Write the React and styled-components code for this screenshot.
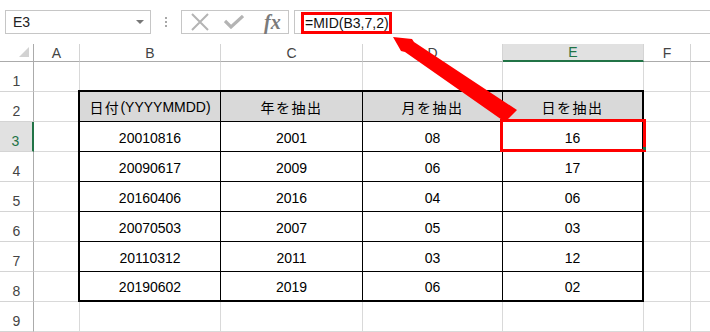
import React from 'react';
import styled, { createGlobalStyle } from 'styled-components';

const GlobalStyle = createGlobalStyle`
  * { box-sizing: border-box; }
  body {
    margin: 0;
    background: #fff;
    font-family: "Liberation Sans", "Noto Sans CJK JP", sans-serif;
  }
`;

const Page = styled.div`
  position: relative;
  width: 710px;
  height: 332px;
  overflow: hidden;
  background: #fff;
`;

// formula bar strip
const Toolbar = styled.div`
  display: flex;
  align-items: flex-start;
  height: 44px;
  padding: 10px 0 0 5px;
`;

const NameBox = styled.div`
  display: flex;
  align-items: center;
  justify-content: space-between;
  width: 146px;
  height: 24px;
  padding: 0 6px 0 7px;
  border: 1px solid #c6c6c6;
  font-size: 14px;
  color: #222;
`;

const Caret = styled.span`
  width: 0;
  height: 0;
  border-left: 4px solid transparent;
  border-right: 4px solid transparent;
  border-top: 4px solid #777;
`;

const Grip = styled.div`
  display: flex;
  flex-direction: column;
  align-items: center;
  justify-content: center;
  gap: 2px;
  width: 30px;
  height: 24px;

  span {
    width: 2px;
    height: 2px;
    background: #a8a8a8;
  }
`;

const ButtonGroup = styled.div`
  display: flex;
  align-items: center;
  width: 108px;
  height: 24px;
  padding: 0 0 0 8px;
  border: 1px solid #c6c6c6;
  gap: 14px;
`;

const Fx = styled.span`
  font-family: "Liberation Serif", serif;
  font-style: italic;
  font-weight: bold;
  font-size: 20px;
  line-height: 20px;
  color: #7a7a7a;
  margin-left: 6px;
`;

const FormulaBar = styled.div`
  flex: 1;
  height: 24px;
  margin: 0 -2px 0 5px;
  padding-left: 6px;
  border: 1px solid #c6c6c6;
`;

const Callout = styled.span`
  display: inline-block;
  height: 22px;
  margin-top: 1px;
  padding: 0 0 0 1px;
  border: 3px solid #ff0000;
  font-size: 14px;
  line-height: 16px;
  color: #111;
`;

// spreadsheet grid; column G runs past the window edge
const Sheet = styled.div`
  display: grid;
  grid-template-columns: 34px 46px 141px 142px 140px 141px 47px 70px;
  grid-template-rows: 18px repeat(9, 30px);
`;

const Corner = styled.div`
  display: flex;
  align-items: flex-end;
  justify-content: flex-end;
  padding: 0 4px 4px 0;
  border-right: 1px solid #ababab;
  border-bottom: 1px solid #ababab;

  span {
    width: 0;
    height: 0;
    border-left: 10px solid transparent;
    border-bottom: 10px solid #d2d2d2;
  }
`;

const ColHead = styled.div`
  display: flex;
  align-items: center;
  justify-content: center;
  font-size: 14px;
  color: ${(p) => (p.$active ? '#217346' : '#444')};
  background: ${(p) => (p.$active ? '#e1e1e1' : '#fff')};
  border-right: 1px solid #d4d4d4;
  border-bottom: ${(p) => (p.$active ? '2px solid #217346' : '1px solid #ababab')};
`;

const RowHead = styled.div`
  display: flex;
  align-items: flex-end;
  justify-content: center;
  padding: 0 ${(p) => (p.$active ? '1px' : '0')} 3px 0;
  font-size: 14px;
  line-height: 14px;
  color: ${(p) => (p.$active ? '#217346' : '#444')};
  background: ${(p) => (p.$active ? '#e1e1e1' : '#fff')};
  border-right: ${(p) => (p.$active ? '2px solid #217346' : '1px solid #ababab')};
  border-bottom: 1px solid #d4d4d4;
`;

const Cell = styled.div`
  border-right: 1px solid #d9d9d9;
  border-bottom: 1px solid #d9d9d9;
`;

const DataTable = styled.div`
  grid-column: 3 / 7;
  grid-row: 3 / 10;
  margin: -2px 0 0 -2px;
  display: grid;
  grid-template-columns: 141px 142px 140px 139px;
  grid-template-rows: repeat(6, 30px) 28px;
  border: 2px solid #000;
  background: #fff;
`;

const TCell = styled.div`
  position: relative;
  display: flex;
  align-items: center;
  justify-content: center;
  padding-top: ${(p) => (p.$head ? '0' : '2px')};
  font-size: 14px;
  color: #000;
  background: ${(p) => (p.$head ? '#d9d9d9' : '#fff')};
  border-right: ${(p) => (p.$lastCol ? 'none' : '1px solid #000')};
  border-bottom: ${(p) => (p.$lastRow ? 'none' : '1px solid #000')};
`;

const Jp = styled.span`
  letter-spacing: 1.5px;
`;

const Highlight = styled.div`
  position: absolute;
  top: -3px;
  left: -3px;
  right: -4px;
  bottom: -1px;
  border: 3px solid #ff0000;
`;

const FillHandle = styled.span`
  position: absolute;
  right: -3px;
  bottom: -1px;
  width: 3px;
  height: 3px;
  background: #217346;
`;

const Overlay = styled.svg`
  position: absolute;
  left: 0;
  top: 0;
  pointer-events: none;
`;

// G's letter sits beyond the window edge, so its header stays blank
const columns = [
  { id: 'A', label: 'A' },
  { id: 'B', label: 'B' },
  { id: 'C', label: 'C' },
  { id: 'D', label: 'D' },
  { id: 'E', label: 'E' },
  { id: 'F', label: 'F' },
  { id: 'G', label: '' },
];

const tableHead = [
  <><Jp>日付</Jp>(YYYYMMDD)</>,
  <Jp>年を抽出</Jp>,
  <Jp>月を抽出</Jp>,
  <Jp>日を抽出</Jp>,
];

const tableRows = [
  ['20010816', '2001', '08', '16'],
  ['20090617', '2009', '06', '17'],
  ['20160406', '2016', '04', '06'],
  ['20070503', '2007', '05', '03'],
  ['20110312', '2011', '03', '12'],
  ['20190602', '2019', '06', '02'],
];

// B2:E8 are drawn by DataTable
const inTable = (row, col) => row >= 2 && row <= 8 && col >= 1 && col <= 4;

const App = () => {
  const gridRows = [];
  for (let r = 1; r <= 9; r++) {
    gridRows.push(<RowHead key={`h${r}`} $active={r === 3}>{r}</RowHead>);
    columns.forEach((c, i) => {
      if (!inTable(r, i)) gridRows.push(<Cell key={`${c.id}${r}`} />);
    });
  }

  return (
    <Page>
      <GlobalStyle />
      <Toolbar>
        <NameBox>
          E3
          <Caret />
        </NameBox>
        <Grip>
          <span />
          <span />
          <span />
        </Grip>
        <ButtonGroup>
          <svg width="20" height="18" viewBox="0 0 20 18">
            <path d="M2 1 L18 17 M18 1 L2 17" stroke="#b4b4b4" strokeWidth="2" fill="none" />
          </svg>
          <svg width="20" height="14" viewBox="0 0 20 14">
            <path d="M1 6 L7 12 L19 1" stroke="#b4b4b4" strokeWidth="3.2" fill="none" />
          </svg>
          <Fx>fx</Fx>
        </ButtonGroup>
        <FormulaBar>
          <Callout>=MID(B3,7,2)</Callout>
        </FormulaBar>
      </Toolbar>

      <Sheet>
        <Corner><span /></Corner>
        {columns.map((c) => (
          <ColHead key={c.id} $active={c.id === 'E'}>{c.label}</ColHead>
        ))}
        {gridRows}
        <DataTable>
          {tableHead.map((h, i) => (
            <TCell key={`th${i}`} $head $lastCol={i === 3}>{h}</TCell>
          ))}
          {tableRows.map((row, ri) =>
            row.map((v, ci) => (
              <TCell key={`${ri}-${ci}`} $lastCol={ci === 3} $lastRow={ri === tableRows.length - 1}>
                {v}
                {ri === 0 && ci === 3 && (
                  <Highlight>
                    <FillHandle />
                  </Highlight>
                )}
              </TCell>
            ))
          )}
        </DataTable>
      </Sheet>

      <Overlay width="710" height="332" viewBox="0 0 710 332">
        <polygon points="393,37 412,39 414,42 517,110 505,122 405,52 401,51" fill="#ff0000" />
      </Overlay>
    </Page>
  );
};

export default App;
